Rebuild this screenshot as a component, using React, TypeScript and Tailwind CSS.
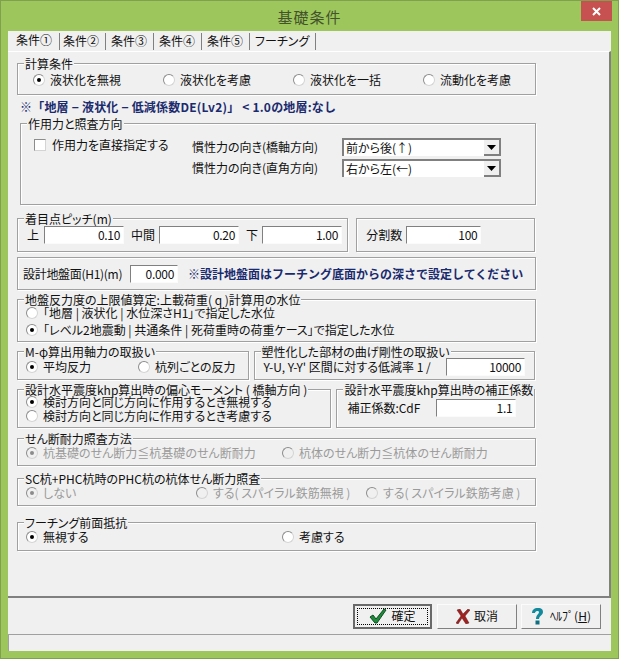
import type { ReactNode } from "react"

const font = "font-['Noto_Sans_CJK_JP','Liberation_Sans',sans-serif]"

function Group({
  title,
  className,
  children,
}: {
  title?: string
  className: string
  children?: ReactNode
}) {
  return (
    <div
      className={`relative border border-[#a0a0a0] shadow-[1px_1px_0_#ffffff,inset_1px_1px_0_#ffffff] ${className}`}
    >
      {title && (
        <span className="absolute -top-[6px] left-[6px] bg-[#f0f0f0] px-px text-[12px] leading-[12px] whitespace-nowrap">
          {title}
        </span>
      )}
      {children}
    </div>
  )
}

function Radio({
  label,
  checked,
  disabled,
  className = "",
}: {
  label: string
  checked?: boolean
  disabled?: boolean
  className?: string
}) {
  return (
    <div
      className={`flex h-[14px] items-center gap-[5px] text-[12px] leading-[14px] whitespace-nowrap ${disabled ? "text-[#9a9a9a]" : "text-[#111111]"} ${className}`}
    >
      <span
        className={`flex h-[12px] w-[12px] shrink-0 items-center justify-center rounded-full border border-[#d4d4d4] border-t-[#8c8c8c] border-l-[#8c8c8c] ${disabled ? "bg-[#f0f0f0]" : "bg-white"}`}
      >
        {checked && (
          <span
            className={`h-[4px] w-[4px] rounded-full ${disabled ? "bg-[#8c8c8c]" : "bg-black"}`}
          />
        )}
      </span>
      {label}
    </div>
  )
}

function NumInput({ value, className }: { value: string; className: string }) {
  return (
    <div
      className={`shrink-0 border border-[#fbfbfb] border-t-[#808080] border-l-[#808080] bg-white pr-[3px] text-right text-[12px] leading-[16px] tracking-[-0.3px] ${className}`}
    >
      {value}
    </div>
  )
}

function Combo({ value }: { value: string }) {
  return (
    <div className="flex h-[18px] w-[159px] border-t-2 border-l-2 border-t-[#808080] border-l-[#808080] bg-white text-[12px] leading-[16px]">
      <span className="flex-1 pl-[2px]">{value}</span>
      <span className="flex w-[17px] items-center justify-center border-r-2 border-b-2 border-r-[#808080] border-b-[#808080] bg-[#f0f0f0]">
        <svg width="9" height="5" viewBox="0 0 9 5">
          <path d="M0 0h9L4.500 5z" fill="#000" />
        </svg>
      </span>
    </div>
  )
}

function DialogButton({
  label,
  icon,
  active,
  className,
}: {
  label: ReactNode
  icon: ReactNode
  active?: boolean
  className: string
}) {
  return (
    <div
      className={`relative flex h-[25px] items-center justify-center border bg-[#f0f0f0] text-[12px] ${active ? "border-2 border-[#696969]" : "border-[#fbfbfb] border-r-[#808080] border-b-[#808080]"} ${className}`}
    >
      {active && (
        <span className="absolute inset-[2px] border border-dotted border-black" />
      )}
      <span className="flex items-center gap-[4px]">
        {icon}
        {label}
      </span>
    </div>
  )
}

const tabs = ["条件②", "条件③", "条件④", "条件⑤", "フーチング"]
const noteBlue =
  "text-[12px] leading-[14px] font-bold text-[#1a2a6e] [font-feature-settings:normal]"

export default function App() {
  return (
    <div
      className={`${font} h-[659px] w-[619px] overflow-hidden border border-[#7fa04e] bg-[#9dc65d] text-[#111111] [font-feature-settings:'palt']`}
    >
      {/* title bar */}
      <div className="relative flex h-[30px] items-center justify-center pt-[2px] text-[15px] tracking-[1px] text-[#44532c]">
        基礎条件
        <span className="absolute top-0 right-[6px] flex h-[20px] w-[31px] items-center justify-center bg-[#c75050]">
          <svg width="9" height="9" viewBox="0 0 9 9">
            <path d="M1 1l7 7M8 1L1 8" stroke="#fff" strokeWidth="2" />
          </svg>
        </span>
      </div>

      <div className="mx-[7px] flex h-[620px] flex-col bg-[#f0f0f0]">
        {/* tabs */}
        <div className="flex h-[20px] items-start pl-[6px] text-[12px] leading-[16px]">
          <div className="mt-[1px] w-[45px] pl-[2px]">条件①</div>
          {tabs.map((t, i) => (
            <div
              key={t}
              className={`mt-[2px] h-[17px] border-r border-[#808080] ${i === 4 ? "w-[66px] pl-[5px]" : i === 0 ? "w-[47px] border-l pl-[3px]" : "w-[48px] pl-[5px]"}`}
            >
              {t}
            </div>
          ))}
        </div>

        {/* tab page */}
        <div className="flex h-[547px] flex-col border-t border-r-2 border-b-2 border-t-white border-r-[#808080] border-b-[#808080] pr-[74px] pl-[9px]">
          <Group title="計算条件" className="mt-[11px] flex h-[32px] w-[519px] items-center pt-[1px] pl-[15px]">
            <Radio checked label="液状化を無視" className="w-[130px]" />
            <Radio label="液状化を考慮" className="w-[130px]" />
            <Radio label="液状化を一括" className="w-[130px]" />
            <Radio label="流動化を考慮" />
          </Group>

          <div className={`mt-[5px] pl-[3px] tracking-[0.2px] ${noteBlue}`}>
            ※「地層 − 液状化 − 低減係数DE(Lv2)」 &lt; 1.0の地層:なし
          </div>

          <Group title="作用力と照査方向" className="mt-[9px] ml-[3px] flex h-[82px] w-[516px] pt-[14px] pl-[13px]">
            <div className="flex h-[14px] w-[158px] items-center gap-[6px] text-[12px] leading-[14px]">
              <span className="h-[12px] w-[12px] border border-[#d4d4d4] border-t-[#8c8c8c] border-l-[#8c8c8c] bg-white" />
              作用力を直接指定する
            </div>
            <div className="flex flex-col gap-[3px] text-[12px] leading-[18px]">
              <div className="flex">
                <span className="w-[150px]">慣性力の向き(橋軸方向)</span>
                <Combo value="前から後(↑)" />
              </div>
              <div className="flex">
                <span className="w-[150px]">慣性力の向き(直角方向)</span>
                <Combo value="右から左(←)" />
              </div>
            </div>
          </Group>

          <div className="mt-[13px] flex gap-[8px]">
            <Group title="着目点ピッチ(m)" className="flex h-[34px] w-[332px] items-center gap-[4px] pl-[9px] text-[12px]">
              <span className="w-[10px]">上</span>
              <NumInput value="0.10" className="ml-[3px] w-[80px]" />
              <span className="ml-[3px]">中間</span>
              <NumInput value="0.20" className="w-[80px]" />
              <span className="ml-[3px]">下</span>
              <NumInput value="1.00" className="w-[80px]" />
            </Group>
            <Group className="flex h-[34px] w-[179px] items-center gap-[4px] pl-[9px] text-[12px]">
              分割数
              <NumInput value="100" className="w-[75px]" />
            </Group>
          </div>

          <Group className="mt-[5px] flex h-[33px] w-[519px] items-center pl-[5px] text-[12px]">
            <span className="w-[107px] tracking-[-0.3px] whitespace-nowrap">設計地盤面(H1)(m)</span>
            <NumInput value="0.000" className="w-[48px]" />
            <span className={`ml-[10px] whitespace-nowrap ${noteBlue}`}>
              ※設計地盤面はフーチング底面からの深さで設定してください
            </span>
          </Group>

          <Group title="地盤反力度の上限値算定:上載荷重( q )計算用の水位" className="mt-[9px] flex h-[43px] w-[519px] flex-col justify-end gap-[3px] pb-[4px] pl-[8px]">
            <Radio label="「地層 | 液状化 | 水位深さH1」で指定した水位" />
            <Radio checked label="「レベル2地震動 | 共通条件 | 死荷重時の荷重ケース」で指定した水位" />
          </Group>

          <div className="mt-[9px] flex gap-[5px]">
            <Group title="M-φ算出用軸力の取扱い" className="flex h-[29px] w-[232px] items-end pb-[5px] pl-[8px]">
              <Radio checked label="平均反力" className="w-[112px]" />
              <Radio label="杭列ごとの反力" />
            </Group>
            <Group title="塑性化した部材の曲げ剛性の取扱い" className="flex h-[29px] w-[282px] items-end gap-[3px] pb-[3px] pl-[9px] text-[12px] whitespace-nowrap">
              Y-U, Y-Y' 区間に対する低減率 1 /
              <NumInput value="10000" className="mr-[9px] ml-auto w-[79px]" />
            </Group>
          </div>

          <div className="mt-[9px] flex gap-[5px]">
            <Group title="設計水平震度khp算出時の偏心モーメント ( 橋軸方向 )" className="flex h-[39px] w-[315px] flex-col justify-end pb-[4px] pl-[8px]">
              <Radio checked label="検討方向と同じ方向に作用するとき無視する" />
              <Radio label="検討方向と同じ方向に作用するとき考慮する" />
            </Group>
            <Group title="設計水平震度khp算出時の補正係数" className="flex h-[39px] w-[199px] items-start pt-[9px] pl-[10px] text-[12px]">
              <span className="w-[89px] leading-[18px]">補正係数:CdF</span>
              <NumInput value="1.1" className="w-[80px]" />
            </Group>
          </div>

          <Group title="せん断耐力照査方法" className="mt-[10px] flex h-[28px] w-[519px] items-end pb-[5px] pl-[8px]">
            <Radio checked disabled label="杭基礎のせん断力≦杭基礎のせん断耐力" className="w-[256px]" />
            <Radio disabled label="杭体のせん断力≦杭体のせん断耐力" />
          </Group>

          <Group title="SC杭+PHC杭時のPHC杭の杭体せん断力照査" className="mt-[12px] flex h-[28px] w-[519px] items-end pb-[5px] pl-[8px]">
            <Radio checked disabled label="しない" className="w-[170px]" />
            <Radio disabled label="する( スパイラル鉄筋無視 )" className="w-[170px]" />
            <Radio disabled label="する( スパイラル鉄筋考慮 )" />
          </Group>

          <Group title="フーチング前面抵抗" className="mt-[16px] flex h-[29px] w-[519px] items-end pb-[6px] pl-[8px]">
            <Radio checked label="無視する" className="w-[256px]" />
            <Radio label="考慮する" />
          </Group>
        </div>

        {/* button bar */}
        <div className="flex h-[36px] items-center justify-end gap-[4px] pr-[10px]">
          <DialogButton
            active
            className="mr-[1px] w-[79px]"
            label="確定"
            icon={
              <svg width="18" height="16" viewBox="0 0 18 16">
                <path d="M1 9l3-2 3 4 8-10 2 1-9 13H6z" fill="#1f8a3a" stroke="#0f4f22" strokeWidth="1" />
              </svg>
            }
          />
          <DialogButton
            className="w-[80px]"
            label="取消"
            icon={
              <svg width="14" height="15" viewBox="0 0 14 15">
                <path d="M1 1l3-1 3 5 5-5 2 1-5 6 4 7-3 1-4-6-4 6-2-1 5-7z" fill="#a32020" stroke="#5c1a1a" strokeWidth=".5" />
              </svg>
            }
          />
          <DialogButton
            className="w-[80px]"
            label={
              <span className="pl-[2px] [font-feature-settings:normal]">
                ﾍﾙﾌﾟ(<u>H</u>)
              </span>
            }
            icon={
              <svg width="13" height="17" viewBox="0 0 13 17">
                <path d="M1 5C1 2 3 0 7 0s5 2 5 4c0 3-4 4-4 7H5c0-4 3-5 3-7 0-1-1-1-2-1-1 0-2 1-2 2z" fill="#128a9c" />
                <rect x="4.500" y="12.500" width="4" height="4" fill="#0f6f80" />
              </svg>
            }
          />
        </div>

        {/* status bar */}
        <div className="h-[17px] border-t border-l border-t-[#a0a0a0] border-l-[#a0a0a0]" />
      </div>
    </div>
  )
}
